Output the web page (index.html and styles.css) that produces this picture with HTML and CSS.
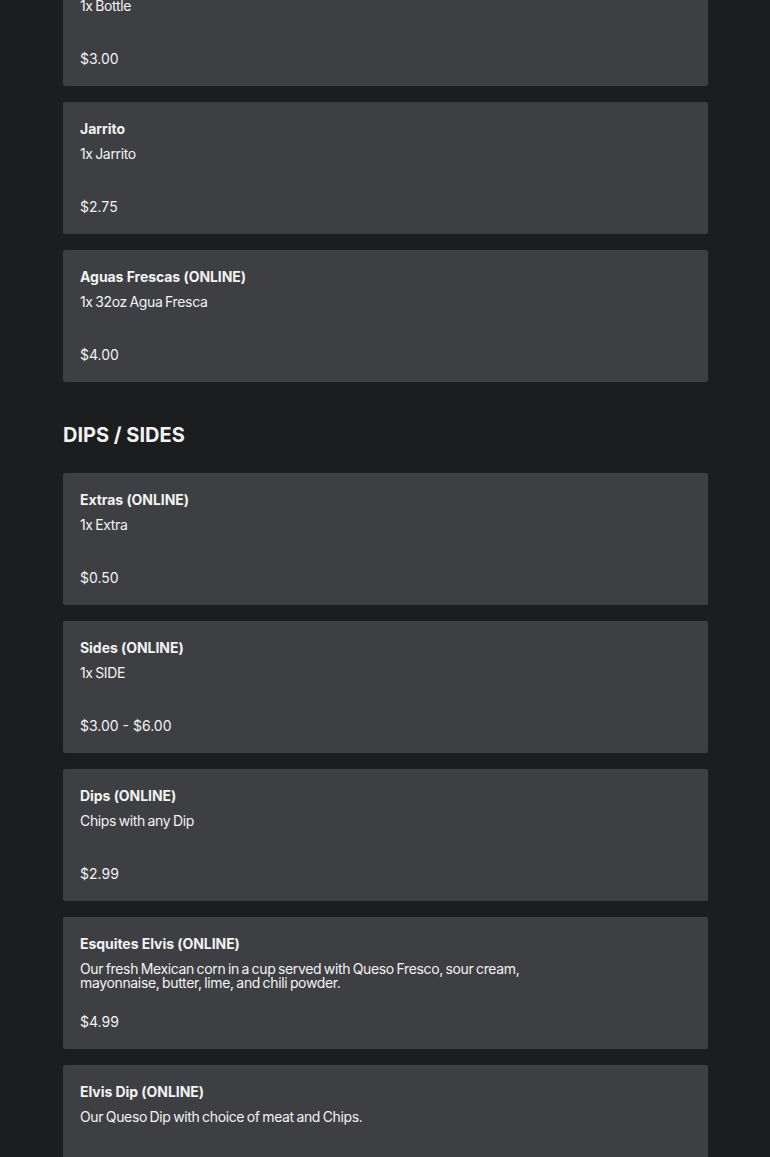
FILE: index.html
```html
<!DOCTYPE html>
<html>
<head>
<meta charset="utf-8">
<link rel="stylesheet" href="styles.css">
</head>
<body>
<main class="menu">
  <section class="section">
    <div class="card">
      <div class="title">Bottled Soda</div>
      <div class="desc">1x Bottle</div>
      <div class="price">$3.00</div>
    </div>
    <div class="card">
      <div class="title">Jarrito</div>
      <div class="desc">1x Jarrito</div>
      <div class="price">$2.75</div>
    </div>
    <div class="card">
      <div class="title">Aguas Frescas (ONLINE)</div>
      <div class="desc">1x 32oz Agua Fresca</div>
      <div class="price">$4.00</div>
    </div>
  </section>
  <section class="section">
    <h2 class="heading">DIPS / SIDES</h2>
    <div class="card">
      <div class="title">Extras (ONLINE)</div>
      <div class="desc">1x Extra</div>
      <div class="price">$0.50</div>
    </div>
    <div class="card">
      <div class="title">Sides (ONLINE)</div>
      <div class="desc">1x SIDE</div>
      <div class="price">$3.00 - $6.00</div>
    </div>
    <div class="card">
      <div class="title">Dips (ONLINE)</div>
      <div class="desc">Chips with any Dip</div>
      <div class="price">$2.99</div>
    </div>
    <div class="card">
      <div class="title">Esquites Elvis (ONLINE)</div>
      <div class="desc">Our fresh Mexican corn in a cup served with Queso Fresco, sour cream, mayonnaise, butter, lime, and chili powder.</div>
      <div class="price">$4.99</div>
    </div>
    <div class="card">
      <div class="title">Elvis Dip (ONLINE)</div>
      <div class="desc">Our Queso Dip with choice of meat and Chips.</div>
      <div class="price">$6.99</div>
    </div>
  </section>
</main>
</body>
</html>
```
FILE: styles.css
```css
html, body {
  margin: 0;
  padding: 0;
  background: #1c1d1f;
  overflow: hidden;
}
body {
  font-family: "Inter", "Liberation Sans", sans-serif;
  color: #f2f2f2;
}
.menu {
  width: 645px;
  margin: -46px 0 0 63px;
  display: flex;
  flex-direction: column;
  gap: 41px;
}
.section {
  display: flex;
  flex-direction: column;
  gap: 16px;
}
.heading {
  margin: 0 0 10px 0;
  font-size: 20px;
  line-height: 24px;
  font-weight: 700;
  letter-spacing: 0;
}
.card {
  background: #3e3f42;
  border-radius: 2px;
  padding: 17px 17px 17px;
  height: 132px;
  box-sizing: border-box;
}
.title {
  font-size: 14px;
  line-height: 20px;
  font-weight: 700;
  letter-spacing: -0.05px;
}
.desc {
  margin-top: 8px;
  height: 28px;
  font-size: 14px;
  line-height: 14px;
  max-width: 460px;
  letter-spacing: -0.35px;
  word-spacing: -1px;
}
.price {
  margin-top: 22px;
  font-size: 14px;
  line-height: 20px;
}
```
